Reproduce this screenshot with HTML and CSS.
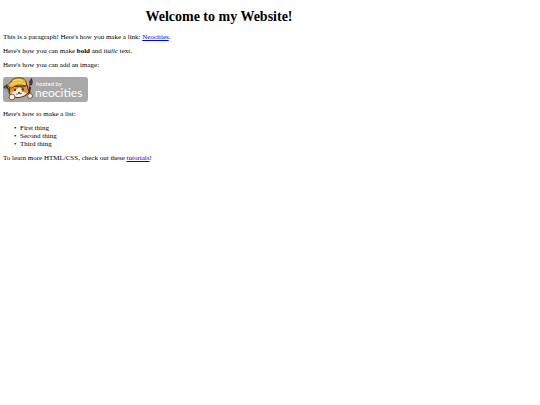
FILE: index.html
```html
<!DOCTYPE html>
<html lang="en">
<head>
<meta charset="utf-8">
<title>Welcome to my Website!</title>
<link rel="stylesheet" href="styles.css">
</head>
<body>
<main class="page">
  <h1 class="title">Welcome to my Website!</h1>
  <p>This is a paragraph! Here's how you make a link: <a href="#neocities">Neocities</a>.</p>
  <p>Here's how you can make <strong>bold</strong> and <em>italic</em> text.</p>
  <p>Here's how you can add an image:</p>
  <svg class="badge" viewBox="0 0 85 25" role="img" aria-label="hosted by neocities">
    <rect width="85" height="25" rx="3" fill="#a8a8a8"/>
    <!-- wrench -->
    <path d="M1 9.500L3 11L3.500 9.500L4.500 11.500L8 17" fill="none" stroke="#333" stroke-width="2.200"/>
    <path d="M2 10.500L4 12L8 17.500" fill="none" stroke="#aaa" stroke-width="1"/>
    <!-- paintbrush -->
    <path d="M26 18L27.500 7" stroke="#3b2525" stroke-width="1.800"/>
    <path d="M27 7.500Q25.800 4 28.500 1.500Q30 5 28.700 7.500Z" fill="#96252b" stroke="#2b1c1c" stroke-width=".7"/>
    <path d="M26.800 9L28.200 9.200" stroke="#ddd" stroke-width="1"/>
    <!-- cat with a yellow hard hat -->
    <path d="M7 9L6 16Q8 20 15 20.500Q23 20 26 15L24 8L20 10Z" fill="#e98b2f" stroke="#392414" stroke-width=".9"/>
    <path d="M8 16Q12 14 14 12L17 10L19 15L24 16Q20 20 15 20Q10 20 8 16Z" fill="#fff5e5"/>
    <path d="M4.500 8Q7 5 8 5Q9 1 16 .8Q22 .8 23.500 6Q24 8 22.500 9Q15 6.500 8.500 11Q5 10.500 4.500 8Z" fill="#f1b52d" stroke="#4b3010" stroke-width=".8"/>
    <path d="M10 4Q15 1.500 20 3.500M8 7.500Q15 4 22 7" fill="none" stroke="#ffe179" stroke-width="1"/>
    <ellipse cx="12" cy="13" rx=".8" ry="1.200" fill="#2a1d16"/>
    <ellipse cx="20" cy="12.500" rx=".8" ry="1.200" fill="#2a1d16"/>
    <path d="M15 15H17L16 16ZM13 17Q15 18 16 16Q18 18 19 16" fill="#5a302b" stroke="#5a302b" stroke-width=".5"/>
    <circle cx="9" cy="20" r="2.900" fill="#fff4e4" stroke="#5b3b20" stroke-width=".8"/>
    <circle cx="27" cy="19" r="2.500" fill="#fff4e4" stroke="#5b3b20" stroke-width=".8"/>
    <text class="badge-small" x="33" y="9">hosted by</text>
    <text class="badge-name" x="32" y="20">neocities</text>
  </svg>
  <p>Here's how to make a list:</p>
  <ul class="list">
    <li>First thing</li>
    <li>Second thing</li>
    <li>Third thing</li>
  </ul>
  <p>To learn more HTML/CSS, check out these <a href="#tutorials">tutorials</a>!</p>
</main>
</body>
</html>
```
FILE: styles.css
```css
body {
  margin: 0;
  background: #fff;
  color: #000;
  font: 7px/8px "Liberation Serif", "Times New Roman", serif;
}

.page {
  width: 80%;
  margin: 9px 3px;
}

.title {
  margin: 0 0 8px;
  font-size: 14px;
  line-height: 16px;
  text-align: center;
}

p {
  margin: 6px 0;
}

a {
  color: #00e;
}

.badge {
  display: block;
  width: 85px;
  height: 25px;
  margin: 8px 0;
}

.badge-small {
  fill: #fff;
  font: 6px Lato, sans-serif;
}

.badge-name {
  fill: #fff;
  font: 12px Lato, sans-serif;
}

.list {
  margin: 6px 0;
  padding-left: 17px;
  list-style-type: "•\00a0\00a0";
}
```
